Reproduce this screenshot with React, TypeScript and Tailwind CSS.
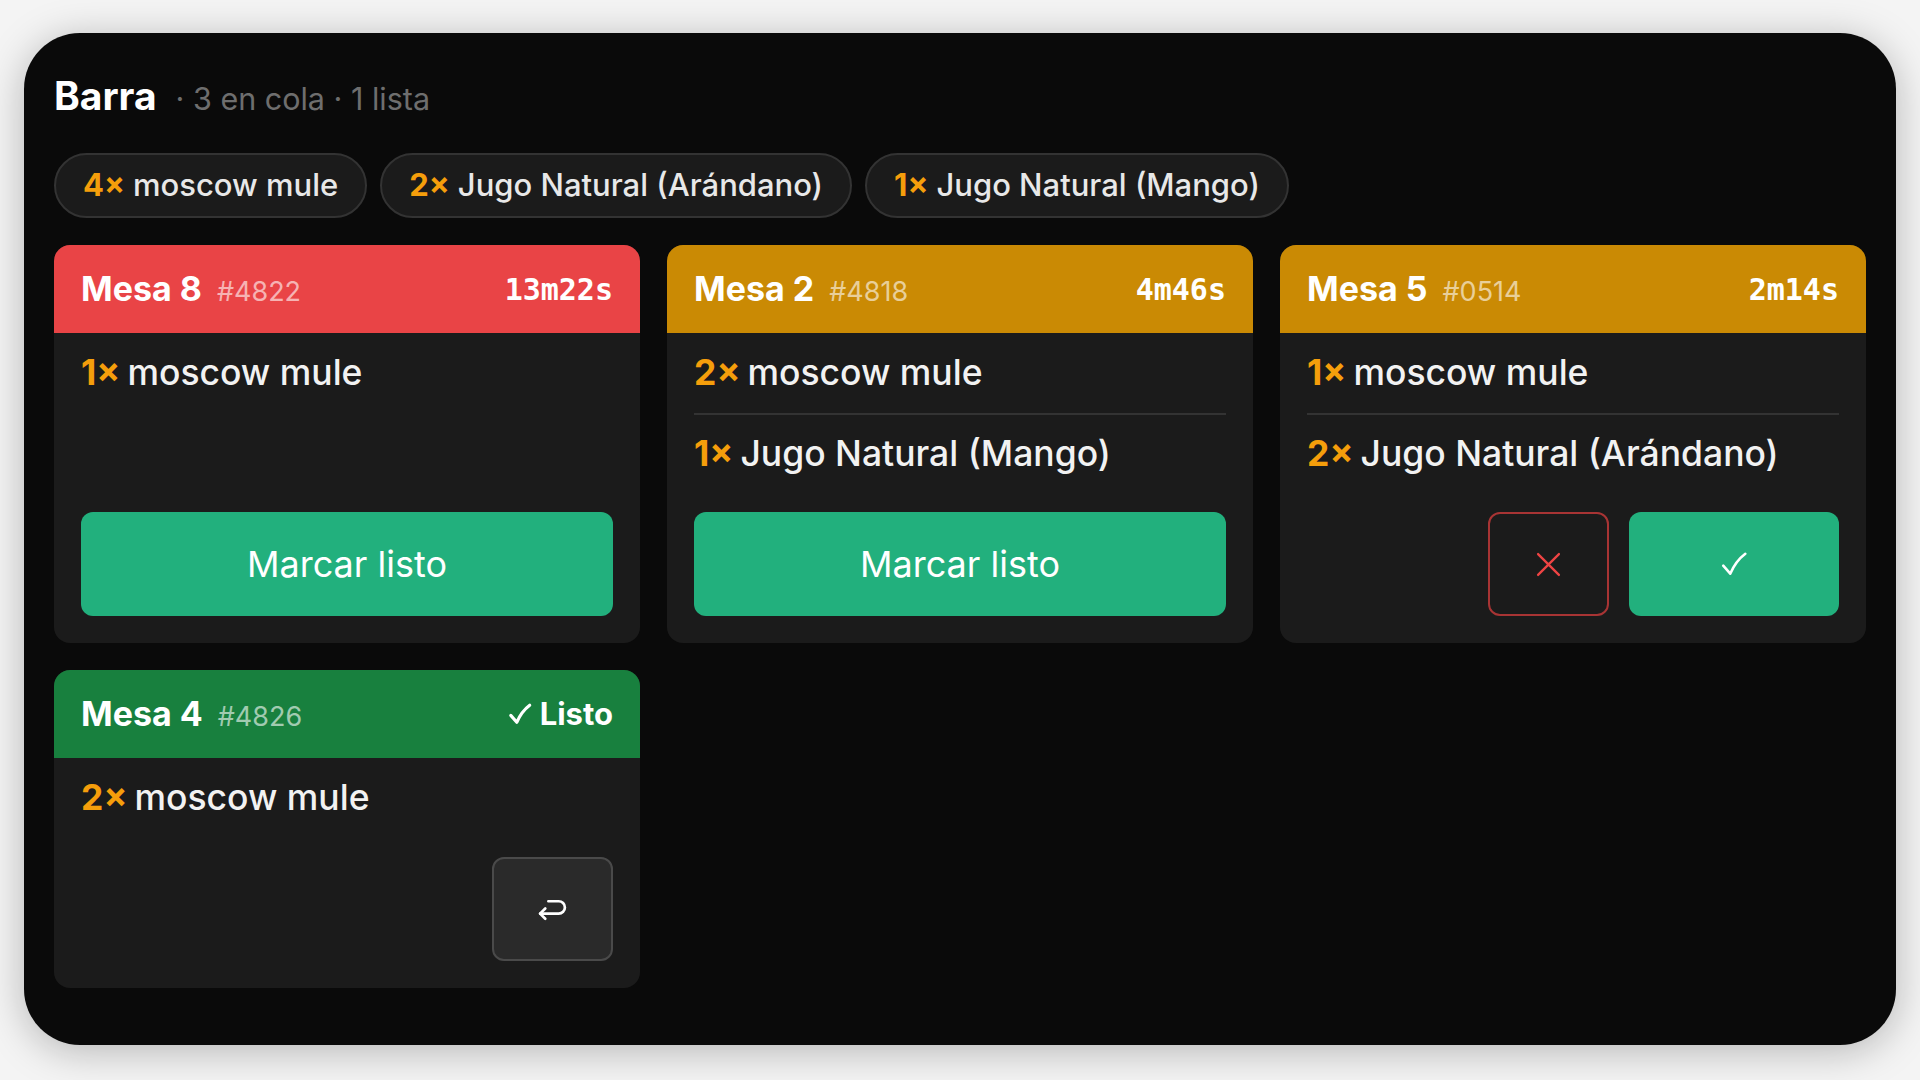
import React from "react";

const sans = { fontFamily: "Inter, 'Noto Sans', sans-serif" };

type Item = { qty: number; name: string };

function Qty({ qty, className }: { qty: number; className?: string }) {
  return <span className={"font-bold text-[#f59e0b] " + (className ?? "")}>{qty}×</span>;
}

function CheckIcon({ className, sw = 2 }: { className?: string; sw?: number }) {
  return (
    <svg viewBox="0 0 26 24" className={className} fill="none" stroke="currentColor" strokeWidth={sw} strokeLinecap="round" strokeLinejoin="round">
      <path d="M3 13.5 L9.5 21 C13 13 17.5 7 23.5 2.5" />
    </svg>
  );
}

function XIcon({ className }: { className?: string }) {
  return (
    <svg viewBox="0 0 24 24" className={className} fill="none" stroke="currentColor" strokeWidth={2.2} strokeLinecap="round">
      <path d="M2 2 L22 22 M22 2 L2 22" />
    </svg>
  );
}

function UndoIcon({ className }: { className?: string }) {
  return (
    <svg viewBox="0 0 30 22" className={className} fill="none" stroke="currentColor" strokeWidth={2.6} strokeLinecap="round" strokeLinejoin="round">
      <path d="M11 3 H21 A6 6 0 0 1 21 15 H3" />
      <path d="M8 10 L3 15 L8 20" />
    </svg>
  );
}

type Card = {
  mesa: string;
  id: string;
  color: string;
  right: React.ReactNode;
  items: Item[];
  action: "listo" | "confirm" | "undo";
};

const mono = { fontFamily: "'DejaVu Sans Mono', monospace" };

const cards: Card[] = [
  {
    mesa: "Mesa 8",
    id: "#4822",
    color: "bg-[#e94446]",
    right: <span className="font-bold text-[30px] text-white" style={mono}>13m22s</span>,
    items: [{ qty: 1, name: "moscow mule" }],
    action: "listo",
  },
  {
    mesa: "Mesa 2",
    id: "#4818",
    color: "bg-[#ca8a04]",
    right: <span className="font-bold text-[30px] text-white" style={mono}>4m46s</span>,
    items: [
      { qty: 2, name: "moscow mule" },
      { qty: 1, name: "Jugo Natural (Mango)" },
    ],
    action: "listo",
  },
  {
    mesa: "Mesa 5",
    id: "#0514",
    color: "bg-[#ca8a04]",
    right: <span className="font-bold text-[30px] text-white" style={mono}>2m14s</span>,
    items: [
      { qty: 1, name: "moscow mule" },
      { qty: 2, name: "Jugo Natural (Arándano)" },
    ],
    action: "confirm",
  },
  {
    mesa: "Mesa 4",
    id: "#4826",
    color: "bg-[#18803e]",
    right: (
      <span className="flex items-center gap-[8px] font-bold text-[31px] text-white">
        <CheckIcon className="w-[24px] h-[24px]" sw={3.4} />
        Listo
      </span>
    ),
    items: [{ qty: 2, name: "moscow mule" }],
    action: "undo",
  },
];

function OrderCard({ card }: { card: Card }) {
  return (
    <div className="flex flex-col rounded-2xl overflow-hidden bg-[#1b1b1b]">
      <div className={"h-[88px] shrink-0 px-[27px] flex items-center justify-between " + card.color}>
        <div className="flex items-baseline gap-[15px]">
          <span className="text-[34px] font-bold text-white leading-none">{card.mesa}</span>
          <span className="text-[27px] text-white/60 leading-none">{card.id}</span>
        </div>
        {card.right}
      </div>
      <div className="flex-1 flex flex-col px-[27px] pb-[27px]">
        {card.items.map((it, i) => (
          <div
            key={i}
            className={"h-[80px] flex items-center text-[35.5px] font-medium text-[#f2f2f2] " + (i > 0 ? "border-t-2 border-[#333333]" : "")}
          >
            <Qty qty={it.qty} />
            <span className="ml-[7px]">{it.name}</span>
          </div>
        ))}
        <div className="mt-auto pt-[19px] flex justify-end gap-[20px]">
          {card.action === "listo" && (
            <button className="w-full h-[104px] rounded-xl bg-[#22b07d] text-white text-[36px]">Marcar listo</button>
          )}
          {card.action === "confirm" && (
            <>
              <button className="w-[121px] h-[104px] rounded-xl border-2 border-[#a83434] flex items-center justify-center text-[#ef4444]">
                <XIcon className="w-[25px] h-[25px]" />
              </button>
              <button className="w-[210px] h-[104px] rounded-xl bg-[#22b07d] flex items-center justify-center text-white">
                <CheckIcon className="w-[28px] h-[26px]" sw={2.4} />
              </button>
            </>
          )}
          {card.action === "undo" && (
            <button className="w-[121px] h-[104px] rounded-xl border-2 border-[#4a4a4a] bg-[#2a2a2a] flex items-center justify-center text-white">
              <UndoIcon className="w-[31px] h-[23px]" />
            </button>
          )}
        </div>
      </div>
    </div>
  );
}

export default function App() {
  const chips: Item[] = [
    { qty: 4, name: "moscow mule" },
    { qty: 2, name: "Jugo Natural (Arándano)" },
    { qty: 1, name: "Jugo Natural (Mango)" },
  ];
  return (
    <div className="w-[1920px] h-[1080px] bg-[#f4f4f4] px-[24px] pt-[33px] pb-[35px]" style={sans}>
      <div className="h-full rounded-[56px] bg-[#0a0a0a] shadow-[0_6px_40px_rgba(0,0,0,0.26)] px-[30px] pt-[43px]">
        <div className="h-[40px] flex items-baseline gap-[19px]">
          <span className="text-[39px] leading-[40px] font-bold text-white">Barra</span>
          <span className="text-[30.5px] leading-[40px] text-[#6e6e6e]">· 3 en cola · 1 lista</span>
        </div>
        <div className="mt-[37px] flex gap-[13px]">
          {chips.map((c, i) => (
            <div
              key={i}
              className="h-[65px] px-[27px] flex items-center rounded-full border-2 border-[#333333] bg-[#1b1b1b] text-[31px] font-medium text-[#e8e8e8]"
            >
              <Qty qty={c.qty} />
              <span className="ml-[8px]">{c.name}</span>
            </div>
          ))}
        </div>
        <div className="mt-[27px] grid grid-cols-3 gap-[27px]">
          {cards.map((c, i) => (
            <OrderCard key={i} card={c} />
          ))}
        </div>
      </div>
    </div>
  );
}
